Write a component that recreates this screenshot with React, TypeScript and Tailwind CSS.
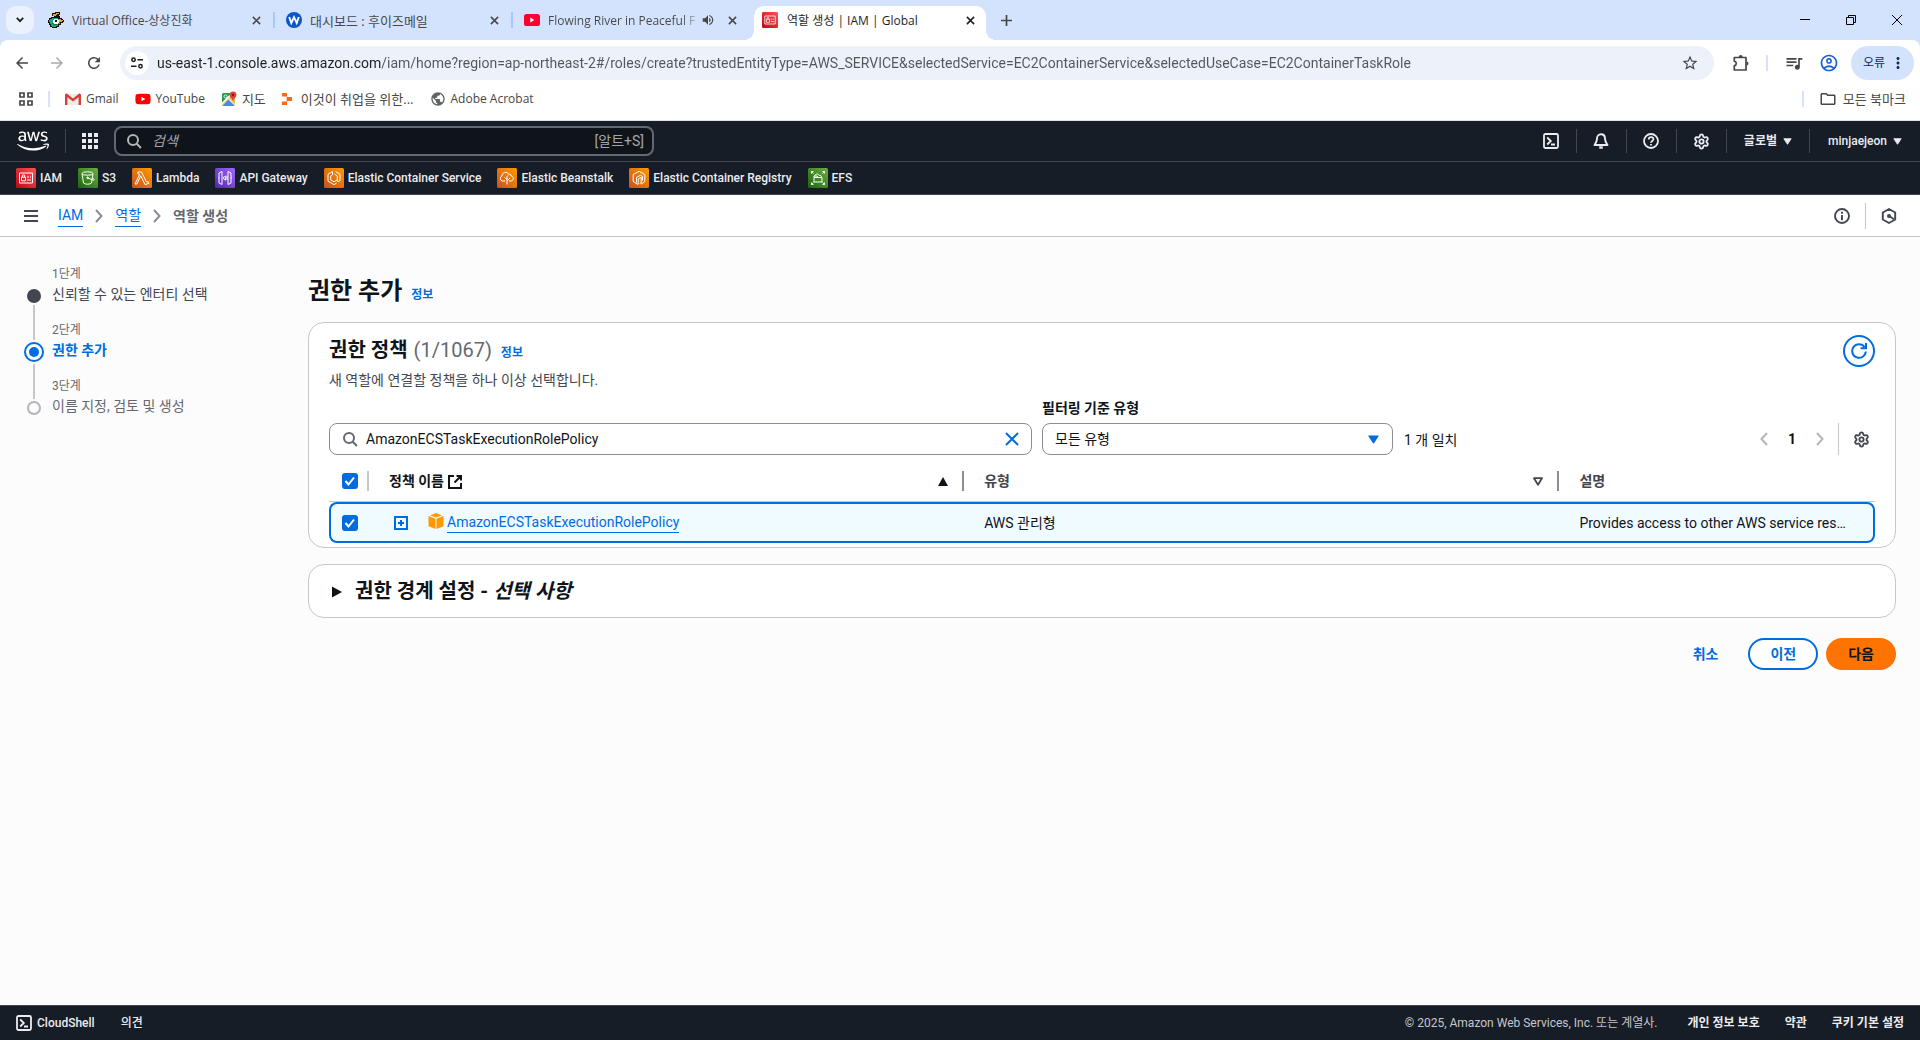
import type { ReactNode } from "react";
import {
  MdArrowBack,
  MdArrowForward,
  MdMoreVert,
  MdOutlineAccountCircle,
  MdOutlineFolder,
  MdPublic,
  MdQueueMusic,
  MdRefresh,
  MdStarBorder,
  MdVolumeUp,
} from "react-icons/md";
import { FaAws, FaYoutube } from "react-icons/fa";
import { Settings } from "lucide-react";

/* ---------- browser icons ---------- */

function CloseGlyph() {
  return (
    <svg viewBox="0 0 10 10" className="h-[9px] w-[9px]" fill="none" stroke="currentColor" strokeWidth="1.7">
      <path d="M1 1l8 8M9 1L1 9" />
    </svg>
  );
}

function DuckIcon() {
  return (
    <svg viewBox="0 0 16 16" className="h-4 w-4 shrink-0" shapeRendering="crispEdges">
      <path d="M7 0h5v3h-1v1h1v2h2v1h1v1h1v2h-1v1h-2v2h-2v2H9v1H4v-1H2v-2H1v-2H0V8h1V6h2V5h3V4H4V1h3z" fill="#111" />
      <path d="M8 1h3v1H9v1H8v1H5V2h3z" fill="#f6a21b" />
      <path d="M4 6h6v1h1v2h1v3h-2v2H8v1H4v-1H3v-2H2v-2H1V8h1V7h2z" fill="#1fa67a" />
      <path d="M6 7h4v1h1v3h-1v1H6v-1H5V8h1z" fill="#fff" />
      <path d="M7 8h2v2H7z" fill="#111" />
      <path d="M11 7h2v1h2v1h-1v1h-3z" fill="#f6a21b" />
      <path d="M4 11h1v1h4v1H5v-1H4z" fill="#0c7655" />
    </svg>
  );
}

function WhoisIcon() {
  return (
    <svg viewBox="0 0 16 16" className="h-4 w-4 shrink-0">
      <circle cx="8" cy="8" r="8" fill="#0b57c9" />
      <path d="M3.200 5l2.100 6L8 5.200l2.700 5.800 2.100-6" fill="none" stroke="#fff" strokeWidth="1.9" />
    </svg>
  );
}

function PlayBadge() {
  return (
    <svg viewBox="0 0 16 12" className="h-3 w-4 shrink-0">
      <rect width="16" height="12" rx="2.600" fill="#ff0033" />
      <path d="M6.300 3.500l4 2.500-4 2.500z" fill="#fff" />
    </svg>
  );
}

function GmailIcon() {
  return (
    <svg viewBox="0 0 16 12" className="h-3 w-4">
      <path d="M1 1h14v11H1z" fill="#ececec" />
      <path d="M0 1.400V12h2.400V4.300L8 8.600l5.600-4.300V12H16V1.400L14.500.3 8 5.400 1.500.3z" fill="#d93f35" />
    </svg>
  );
}

function MapsIcon() {
  return (
    <svg viewBox="0 0 16 16" className="h-4 w-4">
      <rect x="1" y="2" width="13" height="13" rx="1.500" fill="#f5c33b" />
      <path d="M1 3.500A1.500 1.500 0 0 1 2.500 2H11L1 12z" fill="#2a9d52" />
      <path d="M7.500 8.500L14 15H1.500z" fill="#4a86f0" />
      <path d="M1 11.500L10.500 2h2.300L1 13.800z" fill="#fff" />
      <path d="M7 8.600l1.400-1.400L14 13v2z" fill="#d9d9d9" />
      <path d="M12 .5a3.500 3.500 0 0 0-3.500 3.500c0 2.500 3 3.500 3.500 6.500.5-3 3.500-4 3.500-6.500A3.500 3.500 0 0 0 12 .5z" fill="#dc4437" />
      <circle cx="12" cy="4" r="1.200" fill="#7c1d15" />
      <circle cx="4.500" cy="5.500" r="1.500" fill="none" stroke="#fff" strokeWidth=".8" />
    </svg>
  );
}

function BlocksIcon() {
  return (
    <svg viewBox="0 0 10 12" className="h-3 w-[10px]" fill="#f96a12">
      <path d="M0 0h5v3.500H0zM5 4h5v4H5zM0 8.500h5V12H0z" />
      <path d="M4 3h1.500v6H4z" opacity=".35" />
    </svg>
  );
}

function AppsGridIcon() {
  return (
    <svg viewBox="0 0 14 14" className="h-[14px] w-[14px]" fill="none" stroke="#474747" strokeWidth="1.700">
      <path d="M1 1h4v4H1zM9 1h4v4H9zM1 9h4v4H1zM9 9h4v4H9z" />
    </svg>
  );
}

function PuzzleIcon() {
  return (
    <svg viewBox="0 0 18 18" className="h-[18px] w-[18px]" fill="#474747">
      <path d="M3 3.500h11v12.500H2.300v-4.300c2.600-.5 2.600-4 0-4.500V3.500z" fill="none" stroke="#474747" strokeWidth="1.700" strokeLinejoin="round" />
      <path d="M6.700 3a2 2 0 0 1 4 0zM14.500 7.500a2 2 0 0 1 0 4z" />
    </svg>
  );
}

/* ---------- console icons ---------- */

function SearchIcon({ className }: { className: string }) {
  return (
    <svg viewBox="0 0 16 16" className={className} fill="none" stroke="currentColor" strokeWidth="2">
      <circle cx="7" cy="7" r="5" />
      <path d="M10.700 10.700L15 15" />
    </svg>
  );
}

function TerminalIcon({ className }: { className: string }) {
  return (
    <svg viewBox="0 0 16 16" className={className} fill="none" stroke="currentColor" strokeWidth="1.800">
      <rect x="1" y="1" width="14" height="14" rx="1.500" />
      <path d="M4.200 4.500L7.800 8l-3.600 3.500M8 11.500h4" />
    </svg>
  );
}

function BellIcon() {
  return (
    <svg viewBox="0 0 16 16" className="h-4 w-4" fill="none" stroke="currentColor" strokeWidth="1.900" strokeLinejoin="round">
      <path d="M8 1.300c-2.500 0-4 1.900-4 4.200 0 3.300-1 4.500-2.500 6.500h13C13 10 12 8.800 12 5.500c0-2.300-1.500-4.200-4-4.200z" />
      <path d="M6.200 14.500h3.600" strokeWidth="2.400" />
    </svg>
  );
}

function HelpIcon() {
  return (
    <svg viewBox="0 0 16 16" className="h-4 w-4" fill="none" stroke="currentColor" strokeWidth="1.800">
      <circle cx="8" cy="8" r="7" />
      <path d="M5.800 6.500C5.800 3.300 10.400 3.600 10.400 6.200c0 1.700-2.400 1.800-2.400 3.600M8 10.900v1.500" />
    </svg>
  );
}

function InfoIcon() {
  return (
    <svg viewBox="0 0 16 16" className="h-4 w-4" fill="none" stroke="currentColor" strokeWidth="1.900">
      <circle cx="8" cy="8" r="7" />
      <path d="M8 3.800v1.900M8 7v5.200" />
    </svg>
  );
}

function HexIcon() {
  return (
    <svg viewBox="0 0 16 16" className="h-4 w-4" fill="none" stroke="currentColor" strokeWidth="1.900" strokeLinejoin="round">
      <path d="M8 1l6.200 3.500v7L8 15l-6.200-3.500v-7z" />
      <circle cx="8" cy="8" r="2" fill="currentColor" stroke="none" />
      <path d="M8 8l5 3.200" />
    </svg>
  );
}

function Chevron({ left, className }: { left?: boolean; className: string }) {
  return (
    <svg viewBox="0 0 8 14" className={className} fill="none" stroke="currentColor" strokeWidth="2">
      <path d={left ? "M7 1L1.500 7 7 13" : "M1 1l5.500 6L1 13"} />
    </svg>
  );
}

function TriangleDown({ className }: { className: string }) {
  return (
    <svg viewBox="0 0 10 8" className={className} fill="currentColor" stroke="currentColor" strokeLinejoin="round">
      <path d="M.8.8h8.400L5 7.200z" />
    </svg>
  );
}

type ServiceKind = "iam" | "s3" | "lambda" | "api" | "ecs" | "eb" | "ecr" | "efs";

function ServiceIcon({ kind, className }: { kind: ServiceKind; className: string }) {
  const drawings: Record<ServiceKind, { from: string; to: string; art: ReactNode }> = {
    iam: {
      from: "#bd0816",
      to: "#ff5252",
      art: <path d="M3.500 5h13v10h-13zM5.500 9.200h4v3.600h-4zM6.300 9V8a1.200 1.200 0 0 1 2.400 0v1M11 9h2M14 9h1M11 12h4" />,
    },
    s3: {
      from: "#1b660f",
      to: "#6cae3e",
      art: (
        <>
          <ellipse cx="9.500" cy="5.500" rx="5.500" ry="1.700" />
          <path d="M4 5.500L5.500 15c1 1.600 7 1.600 8 0L15 5.500M10 10l5.500 2.200c1.200.2 1-.9-.9-2" />
          <circle cx="9.600" cy="9.800" r=".8" fill="#fff" />
        </>
      ),
    },
    lambda: {
      from: "#c8511b",
      to: "#ff9900",
      art: <path d="M6 4h3.600l4.800 10 1.600-.5.700 1.900-3.700 1.200-4.300-8.800-3.700 8.200H3l4.600-9.500L6.900 6H6z" />,
    },
    api: {
      from: "#4d27aa",
      to: "#a166ff",
      art: <path d="M7 3.500L4 5v10l3 1.500zM13 3.500L16 5v10l-3 1.500zM9.500 8L8.500 10l1 2M11 7.500l-.7 5M12 8v4M3.500 10h1M15.500 10h1" />,
    },
    ecs: {
      from: "#c8511b",
      to: "#ff9900",
      art: (
        <>
          <path d="M11.500 3.600L16 6.200v6.400l-2 1.200M8.500 3.600L4 6.200v7L10 16.600l2.500-1.400" />
          <path d="M10.500 6.200l2.800 1.700v4L10 13.800l-3.300-1.900v-4L8.500 6.800" />
          <path d="M8.500 3.600v3.200M14 13.800l-.7-2" />
        </>
      ),
    },
    eb: {
      from: "#c8511b",
      to: "#ff9900",
      art: <path d="M8 13H5.500a2.600 2.600 0 0 1-.5-5c-.2-3.800 5.400-5 6.600-1.700 1.300-.7 2.600.3 2.500 1.700 3 .3 3 4.600 0 5H12M10 16.500V8.500M10 11.500L7.500 9.500M10 13l3-3M10 8.500l1-1" />,
    },
    ecr: {
      from: "#c8511b",
      to: "#ff9900",
      art: <path d="M9 16.500L4.200 13.500v-7L10 3.300l5.800 3.200v7L12 16.300M9.200 16.300V11l3-1.800v5.500l-1.500.8M13.500 12.500v-4l-2-1.300-4 2.300v5" />,
    },
    efs: {
      from: "#1b660f",
      to: "#6cae3e",
      art: <path d="M6.500 8.500c0-2.800 4-3.300 4.800-1 1.500-.4 2.200.5 2 1.600M6 9.500h8v4.500H6zM6 9.500V8h3l1 1.500M3.500 5.500v-2h2M3.500 3.500l2 2M16.500 5.500v-2h-2M16.500 3.500l-2 2M3.500 14.500v2h2M3.500 16.500l2-2M16.500 14.500v2h-2M16.500 16.500l-2-2" />,
    },
  };
  const d = drawings[kind];
  const id = `grad-${kind}`;
  return (
    <svg viewBox="0 0 20 20" className={className} fill="none" stroke="#fff" strokeWidth="1" strokeLinejoin="round">
      <defs>
        <linearGradient id={id} x1="0" y1="1" x2="1" y2="0">
          <stop offset="0" stopColor={d.from} />
          <stop offset="1" stopColor={d.to} />
        </linearGradient>
      </defs>
      <rect width="20" height="20" rx="1.500" fill={`url(#${id})`} stroke="none" />
      {d.art}
    </svg>
  );
}

/* ---------- browser chrome ---------- */

function Tab({ icon, children, audio, divider = true }: { icon: ReactNode; children: ReactNode; audio?: boolean; divider?: boolean }) {
  return (
    <div className="flex w-[238px] items-center text-[#474747]">
      <div className="flex min-w-0 flex-1 items-center gap-2 pl-[11px]">
        {icon}
        {audio ? (
          <span className="flex-1 bg-[linear-gradient(90deg,#474747_134px,transparent_152px)] bg-clip-text pt-[2px] whitespace-nowrap text-transparent">
            {children}
          </span>
        ) : (
          <span className="min-w-0 flex-1 truncate pt-[2px]">{children}</span>
        )}
        {audio && <MdVolumeUp className="-ml-3 h-[14px] w-[14px] shrink-0" />}
      </div>
      <button type="button" aria-label="탭 닫기" className="grid w-[34px] place-items-center">
        <CloseGlyph />
      </button>
      <span className={divider ? "h-4 w-[2px] bg-[#a8c7fa]" : "h-4 w-[2px]"} />
    </div>
  );
}

function BrowserBar() {
  return (
    <header className="bg-[#d3e3fd] font-['Open_Sans','Noto_Sans_CJK_KR',sans-serif] text-xs leading-5">
      <div className="flex h-10 items-stretch">
        <div className="flex items-center pr-[3px] pl-[6px]">
          <button type="button" aria-label="탭 검색" className="grid h-7 w-7 place-items-center rounded-[10px] bg-[#ebf1fd] text-[#1f1f1f]">
            <svg viewBox="0 0 8 6" className="h-[6px] w-2" fill="none" stroke="currentColor" strokeWidth="1.800">
              <path d="M.8.8L4 4.200 7.200.8" />
            </svg>
          </button>
        </div>
        <Tab icon={<DuckIcon />}>Virtual Office-상상진화</Tab>
        <Tab icon={<WhoisIcon />}><span className="text-[13px]">대시보드 : 후이즈메일</span></Tab>
        <Tab icon={<PlayBadge />} audio divider={false}>Flowing River in Peaceful F</Tab>
        <div className="relative mt-[6px] ml-[3px] flex w-[232px] items-center rounded-t-[10px] bg-white pr-2 pb-[6px] pl-2 text-[#1f1f1f]">
          <span className="absolute bottom-0 -left-[10px] h-[10px] w-[10px] bg-[radial-gradient(circle_at_0_0,transparent_10px,#fff_10px)]" />
          <span className="absolute -right-[10px] bottom-0 h-[10px] w-[10px] bg-[radial-gradient(circle_at_100%_0,transparent_10px,#fff_10px)]" />
          <ServiceIcon kind="iam" className="mr-[9px] h-4 w-4 shrink-0" />
          <span className="flex-1 truncate pt-[2px]">역할 생성 | IAM | Global</span>
          <button type="button" aria-label="탭 닫기" className="grid h-4 w-4 place-items-center">
            <CloseGlyph />
          </button>
        </div>
        <button type="button" aria-label="새 탭" className="ml-[10px] grid w-5 place-items-center text-[#474747]">
          <svg viewBox="0 0 12 12" className="h-[11px] w-[11px]" fill="none" stroke="currentColor" strokeWidth="1.900">
            <path d="M6 0v12M0 6h12" />
          </svg>
        </button>
        <div className="ml-auto flex text-black">
          <button type="button" aria-label="최소화" className="grid w-[46px] place-items-center">
            <svg viewBox="0 0 10 10" className="h-[10px] w-[10px]" stroke="currentColor">
              <path d="M0 4.500h10" />
            </svg>
          </button>
          <button type="button" aria-label="이전 크기로" className="grid w-[46px] place-items-center">
            <svg viewBox="0 0 10 10" className="h-[10px] w-[10px]" fill="none" stroke="currentColor">
              <path d="M.5 2.500h7v7h-7zM2.500 2.500v-2h7v7h-2" />
            </svg>
          </button>
          <button type="button" aria-label="닫기" className="grid w-[46px] place-items-center">
            <svg viewBox="0 0 10 10" className="h-[10px] w-[10px]" stroke="currentColor">
              <path d="M0 0l10 10M10 0L0 10" />
            </svg>
          </button>
        </div>
      </div>

      <div className="rounded-t-lg bg-white pt-[6px]">
        <div className="flex items-center pr-[6px] pl-[13px] text-[#474747]">
          <button type="button" aria-label="뒤로"><MdArrowBack className="h-[18px] w-[18px]" /></button>
          <button type="button" aria-label="앞으로" className="ml-[17px] text-[#ababab]"><MdArrowForward className="h-[18px] w-[18px]" /></button>
          <button type="button" aria-label="새로고침" className="mr-[17px] ml-[19px]"><MdRefresh className="h-[18px] w-[18px]" /></button>
          <div className="flex h-[34px] flex-1 items-center rounded-full bg-[#ecf1fa] pr-[15px] pl-[5px]">
            <button type="button" aria-label="사이트 정보 보기" className="grid h-6 w-6 place-items-center rounded-full bg-white text-[#1f1f1f]">
              <svg viewBox="0 0 12 12" className="h-3 w-3" fill="none" stroke="currentColor" strokeWidth="1.500">
                <circle cx="2.500" cy="2.700" r="1.700" />
                <path d="M6.500 2.700H12M0 9.300h5.500" />
                <circle cx="9.500" cy="9.300" r="1.700" />
              </svg>
            </button>
            <input
              type="text"
              aria-label="주소창"
              readOnly
              value="us-east-1.console.aws.amazon.com/iam/home?region=ap-northeast-2#/roles/create?trustedEntityType=AWS_SERVICE&selectedService=EC2ContainerService&selectedUseCase=EC2ContainerTaskRole"
              className="ml-2 min-w-0 flex-1 bg-[linear-gradient(90deg,#1f1f1f_224px,#54565a_224px)] bg-clip-text font-['Roboto',sans-serif] text-sm text-transparent outline-none"
            />
            <button type="button" aria-label="북마크에 추가"><MdStarBorder className="h-[18px] w-[18px]" /></button>
          </div>
          <button type="button" aria-label="확장 프로그램" className="ml-[18px]"><PuzzleIcon /></button>
          <span className="mx-[16px] h-4 w-[2px] bg-[#d3e3fd]" />
          <button type="button" aria-label="미디어"><MdQueueMusic className="h-5 w-5" /></button>
          <button type="button" aria-label="프로필" className="ml-[15px] text-[#1a5fd0]"><MdOutlineAccountCircle className="h-5 w-5" /></button>
          <button type="button" className="ml-3 flex h-[34px] items-center gap-1 rounded-full bg-[#d3e3fd] pr-[7px] pl-3 text-[#0b2a66]">
            오류
            <MdMoreVert className="h-[18px] w-[18px]" />
          </button>
        </div>
        <nav aria-label="북마크" className="flex h-[41px] items-center border-b border-[#dfe1e5] pr-[14px] pb-[2px] pl-[19px] text-[#474747]">
          <button type="button" aria-label="앱"><AppsGridIcon /></button>
          <span className="mx-[15px] h-4 w-[2px] bg-[#d3e3fd]" />
          <div className="flex items-center gap-4">
            <a href="#gmail" className="flex items-center gap-[5px]"><GmailIcon />Gmail</a>
            <a href="#youtube" className="flex items-center gap-[5px]"><FaYoutube className="h-4 w-4 text-[#ff0000]" />YouTube</a>
            <a href="#maps" className="flex items-center gap-[5px] text-[13px]"><MapsIcon />지도</a>
            <a href="#jobs" className="flex items-center gap-[9px] text-[13px]"><BlocksIcon />이것이 취업을 위한...</a>
            <a href="#acrobat" className="flex items-center gap-[5px]"><MdPublic className="h-4 w-4 text-[#5f6368]" />Adobe Acrobat</a>
          </div>
          <span className="mr-[15px] ml-auto h-4 w-[2px] bg-[#d3e3fd]" />
          <button type="button" className="flex items-center gap-[6px] text-[13px]">
            <MdOutlineFolder className="h-[18px] w-[18px]" />모든 북마크
          </button>
        </nav>
      </div>
    </header>
  );
}

/* ---------- console header ---------- */

const services: { kind: ServiceKind; name: string }[] = [
  { kind: "iam", name: "IAM" },
  { kind: "s3", name: "S3" },
  { kind: "lambda", name: "Lambda" },
  { kind: "api", name: "API Gateway" },
  { kind: "ecs", name: "Elastic Container Service" },
  { kind: "eb", name: "Elastic Beanstalk" },
  { kind: "ecr", name: "Elastic Container Registry" },
  { kind: "efs", name: "EFS" },
];

function NavDivider() {
  return <span className="h-6 w-px bg-[#424650]" />;
}

function ConsoleHeader() {
  return (
    <header className="bg-[#161d26] text-xs text-[#ebebf0]">
      <div className="flex h-[41px] items-center border-b border-[#424650] pl-[17px]">
        <a href="#home" aria-label="AWS 홈" className="mr-4 text-white"><FaAws className="h-8 w-8" /></a>
        <NavDivider />
        <button type="button" aria-label="서비스" className="mx-4">
          <svg viewBox="0 0 16 16" className="h-4 w-4" fill="currentColor">
            <path d="M0 0h4v4H0zM6 0h4v4H6zM12 0h4v4h-4zM0 6h4v4H0zM6 6h4v4H6zM12 6h4v4h-4zM0 12h4v4H0zM6 12h4v4H6zM12 12h4v4h-4z" />
          </svg>
        </button>
        <label className="flex h-[30px] w-[540px] items-center rounded-lg border-2 border-[#656871] bg-[#0f141a] px-2 text-[#b4b4bb]">
          <SearchIcon className="mx-[2px] h-4 w-4" />
          <input type="search" aria-label="검색" placeholder="검색" className="ml-2 min-w-0 flex-1 bg-transparent text-sm outline-none placeholder:text-[#a4a4ad] placeholder:italic" />
          <span className="text-sm text-[#a4a4ad]">[알트+S]</span>
        </label>
        <div className="ml-auto flex items-center">
          <button type="button" aria-label="CloudShell" className="grid w-[49px] place-items-center"><TerminalIcon className="h-4 w-4" /></button>
          <NavDivider />
          <button type="button" aria-label="알림" className="grid w-[49px] place-items-center"><BellIcon /></button>
          <NavDivider />
          <button type="button" aria-label="지원" className="grid w-[49px] place-items-center"><HelpIcon /></button>
          <NavDivider />
          <button type="button" aria-label="설정" className="grid w-[49px] place-items-center"><Settings size={17} strokeWidth={2.6} /></button>
          <NavDivider />
          <button type="button" className="flex items-center gap-[6px] px-[17px] font-bold">글로벌<TriangleDown className="h-[7px] w-[9px]" /></button>
          <NavDivider />
          <button type="button" className="flex items-center gap-[6px] px-[18px] font-medium">minjaejeon<TriangleDown className="h-[7px] w-[9px]" /></button>
        </div>
      </div>
      <nav aria-label="즐겨찾기" className="flex h-[33px] items-center gap-4 border-b border-[#424650] pl-4">
        {services.map((s) => (
          <a key={s.kind} href={`#${s.kind}`} className="flex items-center gap-1 font-medium">
            <ServiceIcon kind={s.kind} className="h-5 w-5" />
            {s.name}
          </a>
        ))}
      </nav>
    </header>
  );
}

function Breadcrumb() {
  return (
    <div className="flex h-[42px] items-center border-b border-[#c6c6cd] bg-white pr-[23px] pl-6 text-[#424650]">
      <button type="button" aria-label="탐색 메뉴 열기">
        <svg viewBox="0 0 14 12" className="h-3 w-[14px]" stroke="currentColor" strokeWidth="2">
          <path d="M0 1h14M0 6h14M0 11h14" />
        </svg>
      </button>
      <nav aria-label="이동 경로" className="ml-5 flex items-center gap-[11px] text-sm leading-[22px]">
        <a href="#iam" className="border-b border-[#006ce0] text-[#006ce0]">IAM</a>
        <Chevron className="h-[14px] w-[10px] text-[#8c8c94]" />
        <a href="#roles" className="border-b border-[#006ce0] text-[#006ce0]">역할</a>
        <Chevron className="h-[14px] w-[10px] text-[#8c8c94]" />
        <span className="font-bold text-[#656871]">역할 생성</span>
      </nav>
      <button type="button" aria-label="정보" className="mr-[15px] ml-auto"><InfoIcon /></button>
      <span className="h-[26px] w-px bg-[#c6c6cd]" />
      <button type="button" aria-label="도우미" className="ml-[15px]"><HexIcon /></button>
    </div>
  );
}

/* ---------- wizard ---------- */

function Steps() {
  return (
    <nav aria-label="단계" className="w-[308px] shrink-0 pt-[27px] pl-6">
      <ol>
        <li className="flex h-14 gap-2">
          <div className="flex w-5 flex-col items-center">
            <span className="mt-[25px] h-[14px] w-[14px] rounded-full bg-[#424650]" />
            <span className="mt-[2px] w-[2px] flex-1 bg-[#c6c6cd]" />
          </div>
          <div>
            <p className="text-xs leading-5 text-[#656871]">1단계</p>
            <a href="#step1" className="block text-sm leading-5 text-[#424650]">신뢰할 수 있는 엔터티 선택</a>
          </div>
        </li>
        <li className="flex h-14 gap-2">
          <div className="flex w-5 flex-col items-center">
            <span className="h-[20px] w-[2px] bg-[#c6c6cd]" />
            <span className="my-[2px] grid h-5 w-5 shrink-0 place-items-center rounded-full border-2 border-[#006ce0]">
              <span className="h-[10px] w-[10px] rounded-full bg-[#006ce0]" />
            </span>
            <span className="w-[2px] flex-1 bg-[#c6c6cd]" />
          </div>
          <div>
            <p className="text-xs leading-5 text-[#656871]">2단계</p>
            <p className="text-sm leading-5 font-bold text-[#006ce0]" aria-current="step">권한 추가</p>
          </div>
        </li>
        <li className="flex h-14 gap-2">
          <div className="flex w-5 flex-col items-center">
            <span className="h-[23px] w-[2px] bg-[#c6c6cd]" />
            <span className="mt-[2px] h-[14px] w-[14px] shrink-0 rounded-full border-2 border-[#b4b4bb]" />
          </div>
          <div>
            <p className="text-xs leading-5 text-[#656871]">3단계</p>
            <p className="text-sm leading-5 text-[#656871]">이름 지정, 검토 및 생성</p>
          </div>
        </li>
      </ol>
    </nav>
  );
}

function Checkbox({ label }: { label: string }) {
  return (
    <label className="grid h-4 w-4 place-items-center">
      <input type="checkbox" defaultChecked aria-label={label} className="col-start-1 row-start-1 h-4 w-4 appearance-none rounded-[3px] bg-[#006ce0]" />
      <svg viewBox="0 0 14 14" className="pointer-events-none col-start-1 row-start-1 h-[14px] w-[14px]" fill="none" stroke="#fff" strokeWidth="2">
        <path d="M2.500 7l3 3.500 5.500-7" />
      </svg>
    </label>
  );
}

function PolicyTable() {
  return (
    <table className="w-full table-fixed border-separate border-spacing-0 text-left text-sm leading-[22px]">
      <colgroup>
        <col className="w-10" />
        <col className="w-[38.5%]" />
        <col className="w-[38.5%]" />
        <col />
      </colgroup>
      <thead>
        <tr className="h-[41px] text-[#424650]">
          <th className="border-b border-[#c6c6cd] p-0">
            <div className="flex items-center justify-between pl-[13px]">
              <Checkbox label="모든 정책 선택" />
              <span className="h-5 w-[2px] bg-[#c6c6cd]" />
            </div>
          </th>
          <th aria-sort="ascending" className="border-b border-[#c6c6cd] p-0">
            <div className="flex items-center pl-5">
              <span className="font-bold text-[#0f141a]">정책 이름</span>
              <svg viewBox="0 0 14 14" className="mt-[2px] ml-1 h-[14px] w-[14px]" fill="none" stroke="#0f141a" strokeWidth="2">
                <path d="M6 1H1v12h12V8M8.500 1H13v4.500M13 1L6.500 7.500" />
              </svg>
              <button type="button" aria-label="정책 이름 정렬" className="mr-[14px] ml-auto">
                <svg viewBox="0 0 10 9" className="h-[9px] w-[10px]" fill="#0f141a">
                  <path d="M5 0l5 9H0z" />
                </svg>
              </button>
              <span className="h-5 w-[2px] bg-[#8c8c94]" />
            </div>
          </th>
          <th className="border-b border-[#c6c6cd] p-0">
            <div className="flex items-center pl-5">
              <span className="font-bold">유형</span>
              <button type="button" aria-label="유형 정렬" className="mr-[14px] ml-auto">
                <svg viewBox="0 0 10 9" className="h-[9px] w-[10px]" fill="none" stroke="currentColor" strokeWidth="1.800" strokeLinejoin="round">
                  <path d="M1 1.200h8L5 7.700z" />
                </svg>
              </button>
              <span className="h-5 w-[2px] bg-[#8c8c94]" />
            </div>
          </th>
          <th className="border-b border-[#c6c6cd] p-0 pl-5 font-bold">설명</th>
        </tr>
      </thead>
      <tbody>
        <tr className="h-[41px] bg-[#f0fbff] text-[#0f141a]">
          <td className="rounded-l-lg border-2 border-r-0 border-[#006ce0] p-0 pl-[11px]">
            <Checkbox label="AmazonECSTaskExecutionRolePolicy 선택" />
          </td>
          <td className="border-y-2 border-[#006ce0] p-0">
            <div className="flex items-center pl-[25px]">
              <button type="button" aria-label="정책 펼치기" className="text-[#006ce0]">
                <svg viewBox="0 0 14 14" className="h-[14px] w-[14px]" fill="none" stroke="currentColor" strokeWidth="2">
                  <path d="M1 1h12v12H1zM7 4v6M4 7h6" />
                </svg>
              </button>
              <svg viewBox="0 0 16 16" className="mb-1 ml-5 h-4 w-4" fill="#ff9900">
                <path d="M8 0l6 2.300-6 2.300-6-2.300zM.5 3l7 2.700V16l-7-2.700zM15.500 3l-7 2.700V16l7-2.700z" />
              </svg>
              <a href="#policy" className="ml-[3px] border-b border-[#006ce0] leading-5 text-[#006ce0]">AmazonECSTaskExecutionRolePolicy</a>
            </div>
          </td>
          <td className="border-y-2 border-[#006ce0] p-0 pl-5">AWS 관리형</td>
          <td className="truncate rounded-r-lg border-2 border-l-0 border-[#006ce0] p-0 pr-5 pl-5">
            Provides access to other AWS service res…
          </td>
        </tr>
      </tbody>
    </table>
  );
}

function PoliciesCard() {
  return (
    <section className="rounded-2xl border border-[#c6c6cd] bg-white px-5 pt-3 pb-1">
      <div className="flex items-start justify-between">
        <div>
          <h2 className="flex items-baseline text-xl leading-[30px]">
            <span className="font-bold">권한 정책</span>
            <span className="ml-[6px] text-[#656871]">(1/1067)</span>
            <a href="#info-policies" className="ml-[9px] text-xs font-bold text-[#006ce0]">정보</a>
          </h2>
          <p className="mt-1 text-sm leading-[22px] text-[#424650]">새 역할에 연결할 정책을 하나 이상 선택합니다.</p>
        </div>
        <button type="button" aria-label="새로고침" className="grid h-8 w-8 place-items-center rounded-full border-2 border-[#006ce0] text-[#006ce0]">
          <svg viewBox="0 0 16 16" className="h-4 w-4" fill="none" stroke="currentColor" strokeWidth="2">
            <path d="M14.800 8.500A6.800 6.800 0 1 1 13.500 4M15 0v5.200H9.600" />
          </svg>
        </button>
      </div>

      <div className="mt-[6px] flex items-end">
        <label className="flex h-8 w-[703px] items-center rounded-lg border border-[#8c8c94] px-3 text-[#656871]">
          <SearchIcon className="h-4 w-4" />
          <input
            type="text"
            aria-label="정책 검색"
            defaultValue="AmazonECSTaskExecutionRolePolicy"
            className="ml-2 min-w-0 flex-1 text-sm text-[#0f141a] outline-none"
          />
          <button type="button" aria-label="지우기" className="text-[#006ce0]">
            <svg viewBox="0 0 14 14" className="h-[14px] w-[14px]" fill="none" stroke="currentColor" strokeWidth="2">
              <path d="M1 1l12 12M13 1L1 13" />
            </svg>
          </button>
        </label>
        <div className="ml-[10px] w-[351px]">
          <label htmlFor="filter-type" className="mb-1 block text-sm leading-[22px] font-bold">필터링 기준 유형</label>
          <div className="grid items-center">
            <select id="filter-type" className="col-start-1 row-start-1 h-8 w-full appearance-none rounded-lg border border-[#8c8c94] bg-white pr-8 pl-3 text-sm">
              <option>모든 유형</option>
            </select>
            <TriangleDown className="pointer-events-none col-start-1 row-start-1 mr-[14px] h-[9px] w-[11px] justify-self-end text-[#006ce0]" />
          </div>
        </div>
        <span className="mb-1 ml-[11px] text-sm leading-[22px]">1 개 일치</span>
        <div className="ml-auto flex h-8 items-center">
          <button type="button" aria-label="이전 페이지" className="px-2 text-[#b4b4bb]"><Chevron left className="h-[14px] w-2" /></button>
          <button type="button" aria-current="page" className="px-3 text-sm font-bold">1</button>
          <button type="button" aria-label="다음 페이지" className="px-2 text-[#b4b4bb]"><Chevron className="h-[14px] w-2" /></button>
          <span className="ml-[6px] h-8 w-px bg-[#c6c6cd]" />
          <button type="button" aria-label="기본 설정" className="pr-[5px] pl-[14px] text-[#424650]"><Settings size={17} strokeWidth={2.6} /></button>
        </div>
      </div>

      <div className="mt-[6px]">
        <PolicyTable />
      </div>
    </section>
  );
}

export default function App() {
  return (
    <div className="flex min-h-screen flex-col bg-[#fcfcfd] font-['Roboto','Noto_Sans_CJK_KR',sans-serif] text-[#0f141a]">
      <BrowserBar />
      <ConsoleHeader />
      <Breadcrumb />
      <div className="flex flex-1">
        <Steps />
        <main className="min-w-0 flex-1 pt-[39px] pr-6">
          <h1 className="flex items-baseline text-2xl leading-[30px] font-bold">
            권한 추가
            <a href="#info" className="ml-[9px] text-xs text-[#006ce0]">정보</a>
          </h1>
          <div className="mt-4">
            <PoliciesCard />
          </div>
          <section className="mt-4 rounded-2xl border border-[#c6c6cd] bg-white">
            <h2>
              <button type="button" aria-expanded="false" className="flex h-[52px] w-full items-center px-[23px] text-xl font-bold">
                <svg viewBox="0 0 10 12" className="mt-[2px] mr-[13px] h-3 w-[10px]" fill="currentColor">
                  <path d="M0 .5L10 6 0 11.500z" />
                </svg>
                <span>권한 경계 설정 - <i>선택 사항</i></span>
              </button>
            </h2>
          </section>
          <div className="mt-5 flex justify-end text-sm font-bold">
            <button type="button" className="h-8 px-5 text-[#006ce0]">취소</button>
            <button type="button" className="ml-[10px] h-8 rounded-full border-2 border-[#006ce0] bg-white px-5 text-[#006ce0]">이전</button>
            <button type="button" className="ml-2 h-8 rounded-full bg-[#ff7300] px-[22px] text-[#0f141a]">다음</button>
          </div>
        </main>
      </div>
      <footer className="flex h-[35px] items-center border-t border-[#424650] bg-[#161d26] px-4 text-xs text-[#ebebf0]">
        <button type="button" className="flex items-center gap-[5px] font-medium"><TerminalIcon className="h-4 w-4" />CloudShell</button>
        <button type="button" className="ml-[26px] font-medium">의견</button>
        <p className="ml-auto text-[#c6c6cd]">© 2025, Amazon Web Services, Inc. 또는 계열사.</p>
        <a href="#privacy" className="ml-[30px] font-bold">개인 정보 보호</a>
        <a href="#terms" className="ml-[25px] font-bold">약관</a>
        <button type="button" className="ml-[25px] font-bold">쿠키 기본 설정</button>
      </footer>
    </div>
  );
}
